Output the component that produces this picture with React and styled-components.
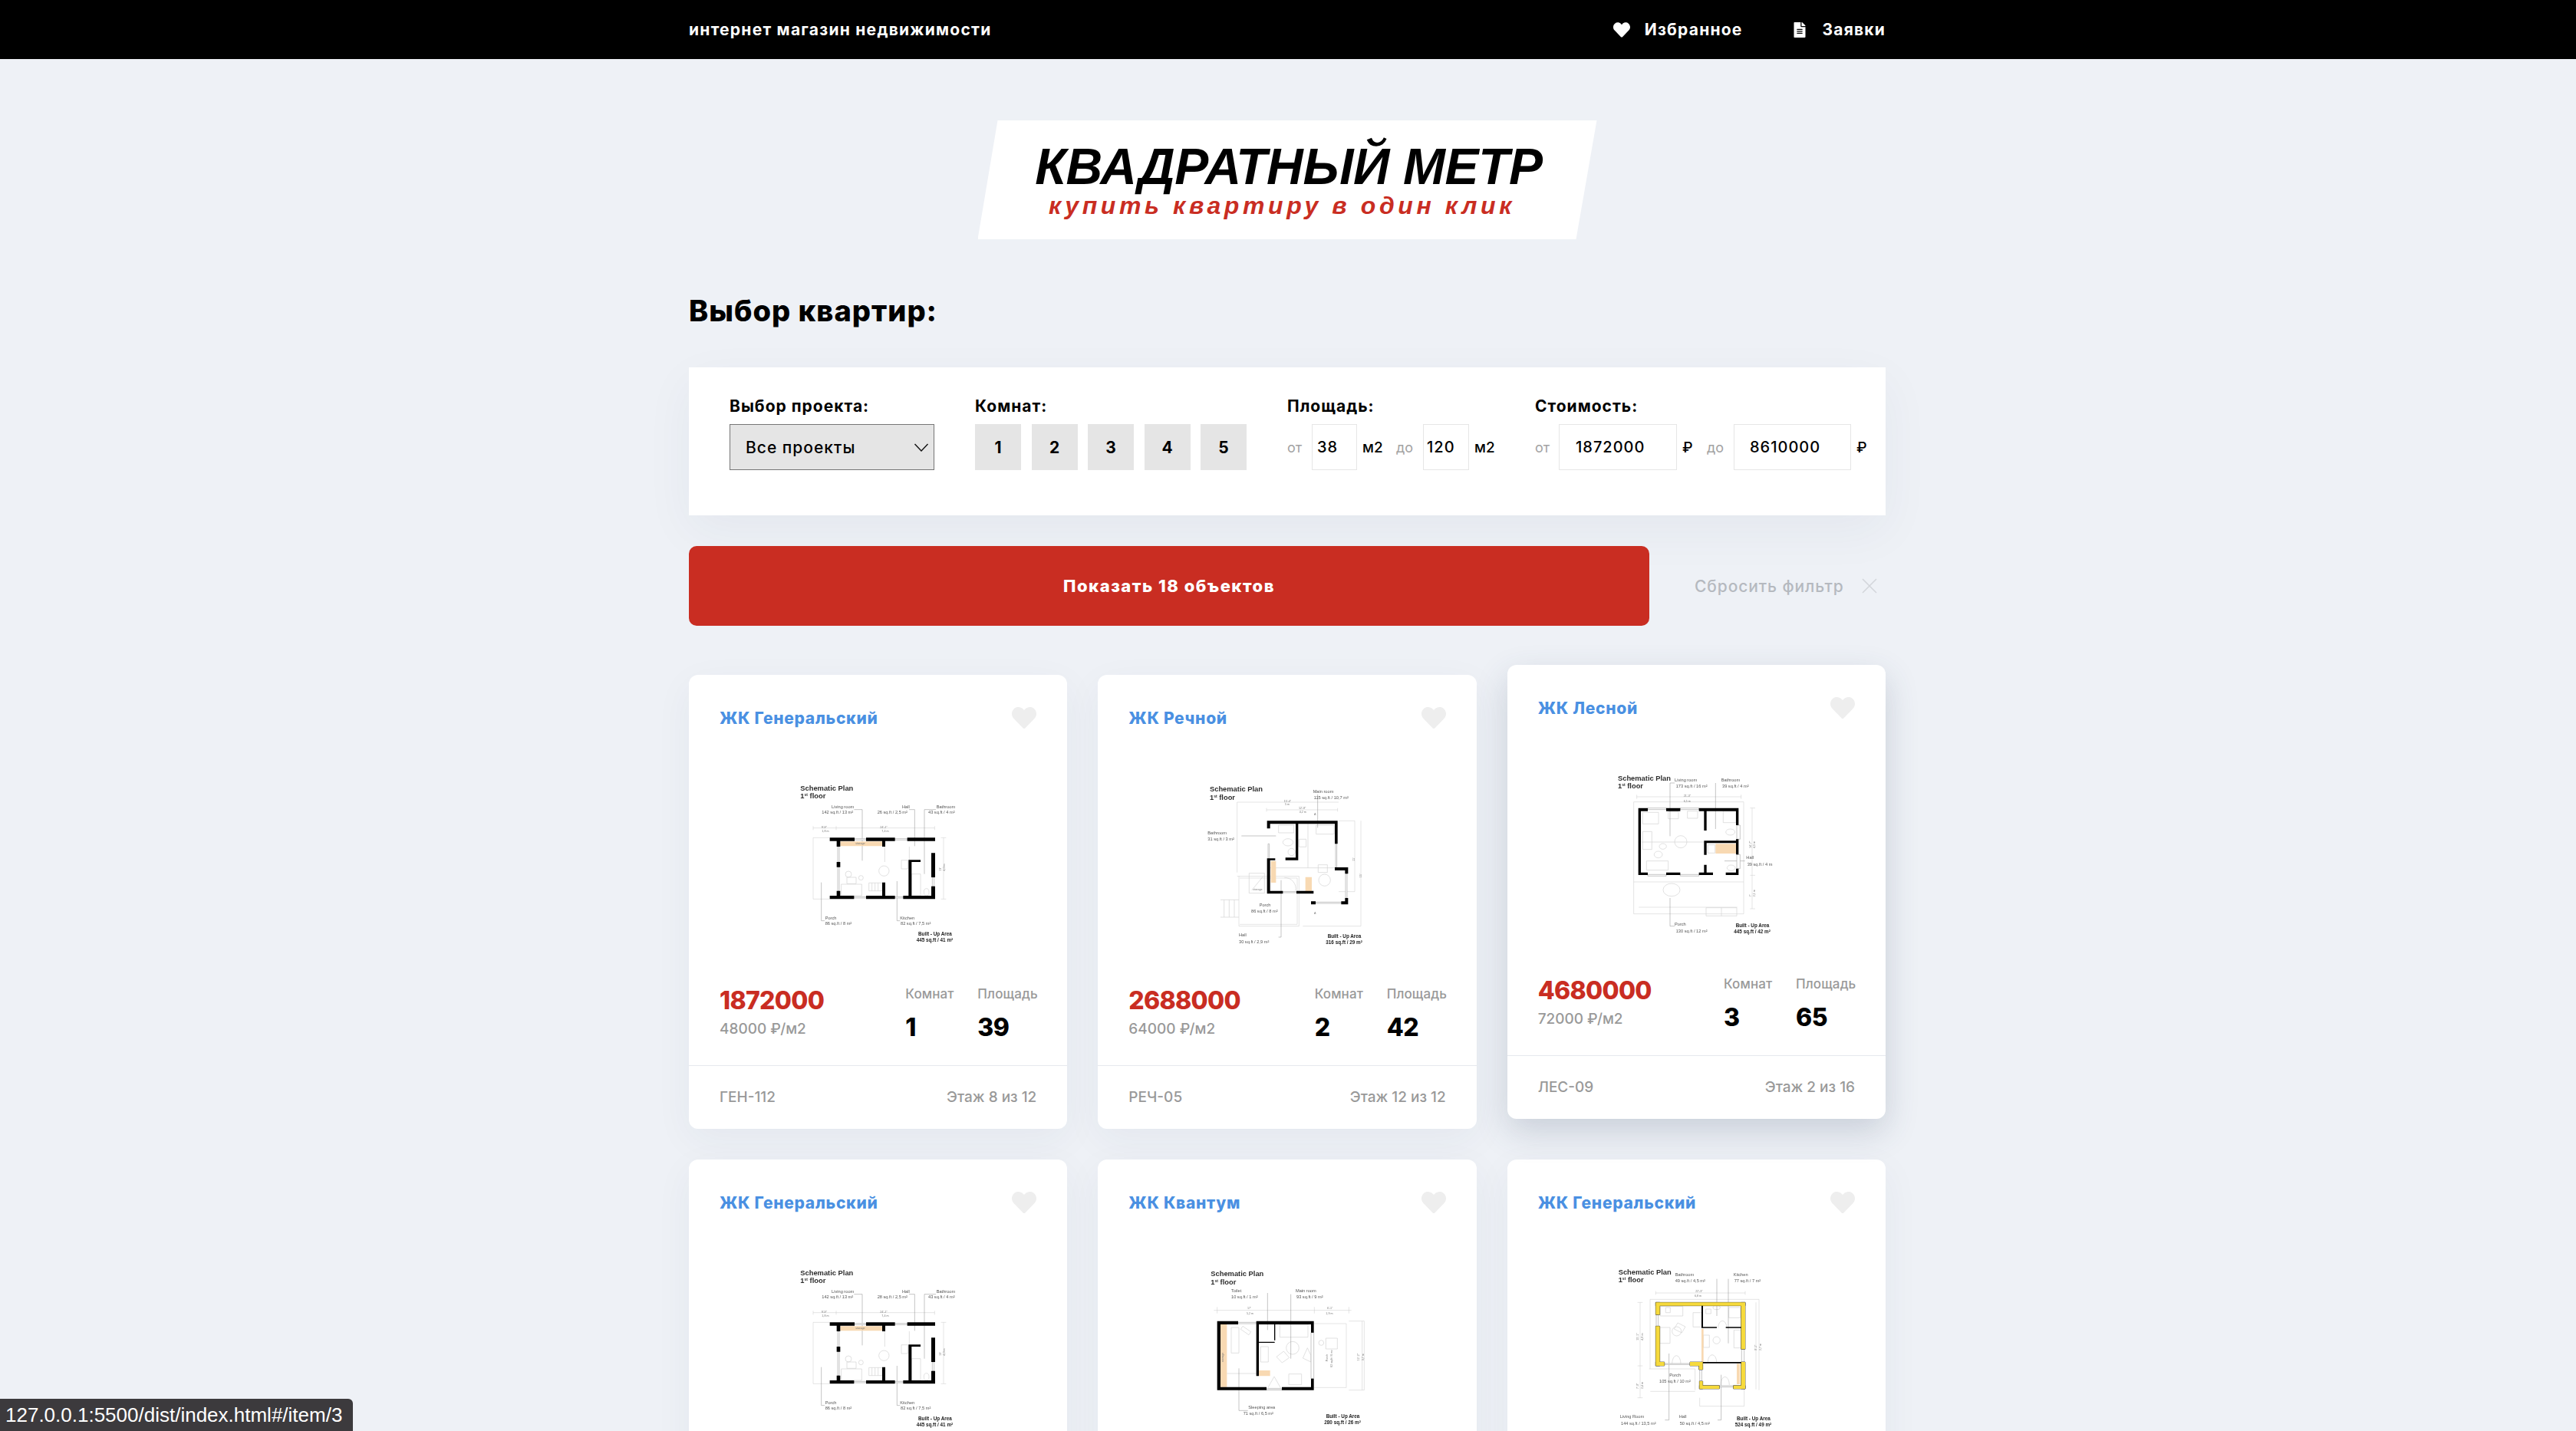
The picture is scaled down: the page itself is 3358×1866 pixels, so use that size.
import React from 'react';
import styled, { createGlobalStyle } from 'styled-components';
import { FaHeart, FaFileAlt } from 'react-icons/fa';

const GlobalStyle = createGlobalStyle`
  html, body {
    margin: 0;
    height: 100%;
    overflow: hidden;
  }
  body {
    padding-right: 2px;
    background: #eef1f6;
    color: #000;
    font-family: Inter, "Noto Sans", sans-serif;
  }
  * {
    box-sizing: border-box;
  }
`;

const Container = styled.div`
  width: 1560px;
  margin: 0 auto;
`;

const Header = styled.header`
  height: 77px;
  margin-right: -2px;
  padding-right: 2px;
  background: #000;
  color: #fff;
`;
const HeaderInner = styled(Container)`
  height: 100%;
  display: flex;
  align-items: center;
  justify-content: space-between;
`;
const Slogan = styled.div`
  font-size: 21px;
  font-weight: 700;
  letter-spacing: 1.25px;
`;
const Nav = styled.nav`
  display: flex;
  gap: 65px;
`;
const NavLink = styled.a`
  display: flex;
  align-items: center;
  gap: 19px;
  font-size: 21px;
  font-weight: 700;
  letter-spacing: 1.2px;
  svg {
    display: block;
  }
`;

const Logo = styled.div`
  width: 807px;
  height: 155px;
  margin: 80px auto 0;
  padding-top: 27px;
  background: #fff;
  clip-path: polygon(26px 0, 100% 0, calc(100% - 27px) 100%, 0 100%);
  display: flex;
  flex-direction: column;
  align-items: center;
  font-family: "Liberation Sans", Arial, sans-serif;
  font-style: italic;
  font-weight: 700;
`;
const LogoTitle = styled.div`
  font-size: 66px;
  line-height: 66px;
  letter-spacing: -0.4px;
  margin-left: 4px;
`;
const LogoSub = styled.div`
  font-size: 32px;
  line-height: 34px;
  letter-spacing: 4.6px;
  color: #c92d22;
  margin-top: 1px;
  margin-left: -14px;
`;

const PageTitle = styled.h1`
  margin: 70px 0 51px;
  font-size: 38px;
  line-height: 46px;
  font-weight: 800;
  letter-spacing: 1px;
`;

const FilterCard = styled.section`
  display: flex;
  gap: 53px;
  height: 193px;
  padding: 39px 0 0 53px;
  background: #fff;
  box-shadow: 0 20px 60px rgba(40, 60, 90, 0.05);
`;
const FilterLabel = styled.div`
  font-size: 21px;
  line-height: 24px;
  font-weight: 700;
  letter-spacing: 1px;
  margin-bottom: 11px;
  white-space: nowrap;
`;
const SelectWrap = styled.div`
  position: relative;
  width: 267px;
  height: 60px;
  svg {
    position: absolute;
    top: 25px;
    right: 7px;
    pointer-events: none;
  }
`;
const ProjectSelect = styled.select`
  appearance: none;
  width: 100%;
  height: 100%;
  padding: 0 20px;
  background: #e5e5e5;
  border: 1px solid #767676;
  border-radius: 0;
  color: #000;
  font: 500 21px Inter, sans-serif;
  letter-spacing: 1px;
`;
const Rooms = styled.div`
  display: flex;
  gap: 13.5px;
`;
const RoomButton = styled.button`
  width: 60px;
  height: 60px;
  padding: 0;
  border: none;
  background: #e5e5e5;
  color: #000;
  font: 700 21px Inter, sans-serif;
`;
const RangeRow = styled.div`
  display: flex;
  align-items: center;
  height: 60px;
`;
const RangeWord = styled.span`
  width: ${p => p.$w}px;
  font-size: 18px;
  color: #a3a3a3;
`;
const RangeUnit = styled.span`
  width: ${p => p.$w}px;
  padding-left: 7px;
  font-size: 19px;
  font-weight: 500;
  white-space: nowrap;
`;
const RangeInput = styled.input`
  width: ${p => p.$w}px;
  height: 60px;
  padding: 0 0 0 ${p => p.$pad}px;
  border: 1px solid #e6e6e6;
  background: #fff;
  color: #000;
  font: 500 20px Inter, sans-serif;
  letter-spacing: 1px;
  outline: none;
`;

const ActionRow = styled.div`
  display: flex;
  align-items: center;
  margin-top: 40px;
`;
const ShowButton = styled.button`
  width: 1252px;
  height: 104px;
  border: none;
  border-radius: 10px;
  background: #c92d22;
  color: #fff;
  font: 800 22px Inter, sans-serif;
  letter-spacing: 1.5px;
`;
const ResetLink = styled.a`
  display: flex;
  align-items: center;
  margin-left: 59px;
  font-size: 21px;
  font-weight: 500;
  color: #b5b9bf;
  letter-spacing: 0.9px;
  white-space: nowrap;
  svg {
    margin-left: 23px;
  }
`;

const CardGrid = styled.div`
  display: grid;
  grid-template-columns: repeat(3, 1fr);
  gap: 40px;
  margin-top: 64px;
`;
const Card = styled.article`
  height: 592px;
  border-radius: 12px;
  background: #fff;
  box-shadow: ${p => (p.$lifted ? '0 16px 44px rgba(50, 70, 100, 0.2)' : '0 14px 50px rgba(40, 60, 90, 0.05)')};
  transform: ${p => (p.$lifted ? 'translateY(-13px)' : 'none')};
`;
const CardTop = styled.div`
  display: flex;
  align-items: center;
  justify-content: space-between;
  height: 30px;
  margin: 41px 40px 0;
`;
const CardProject = styled.div`
  font-size: 21px;
  font-weight: 800;
  letter-spacing: 0.7px;
  color: #4a90e2;
`;
const PlanBox = styled.div`
  width: 250px;
  height: 250px;
  margin: 51px auto 0;
  svg {
    display: block;
    filter: blur(0.35px);
  }
`;
const CardInfo = styled.div`
  display: flex;
  justify-content: space-between;
  height: 103px;
  margin: 34px 40px 0;
`;
const Price = styled.div`
  font-size: 32px;
  line-height: 38px;
  font-weight: 800;
  color: #c92d22;
  letter-spacing: -0.7px;
`;
const PricePerMeter = styled.div`
  margin-top: 6px;
  font-size: 19px;
  line-height: 24px;
  font-weight: 500;
  color: #999;
`;
const Stats = styled.div`
  display: grid;
  grid-template-columns: 94px 77px;
`;
const StatLabel = styled.div`
  font-size: 17px;
  line-height: 20px;
  font-weight: 500;
  color: #999;
  letter-spacing: 0.1px;
`;
const StatValue = styled.div`
  margin-top: 15px;
  font-size: 32px;
  line-height: 38px;
  font-weight: 800;
  letter-spacing: -0.5px;
`;
const CardFooter = styled.div`
  display: flex;
  align-items: center;
  justify-content: space-between;
  height: 83px;
  padding: 0 40px 1px;
  border-top: 1px solid #e6e8ee;
  font-size: 19px;
  font-weight: 500;
  color: #999;
`;

const StatusBubble = styled.div`
  position: fixed;
  left: 0;
  bottom: 0;
  height: 42px;
  padding: 0 14px 0 7px;
  display: flex;
  align-items: center;
  background: #3c3a3d;
  border-top-right-radius: 6px;
  color: #fff;
  font: 26px "Liberation Sans", Arial, sans-serif;
`;

// floor plan drawing, coordinates are 3x real pixels
const PlanTitle = styled.text`
  font: 700 28px "Liberation Sans", Arial, sans-serif;
  fill: #2d2d2d;
`;
const PlanNote = styled.text`
  font: 17px "Liberation Sans", Arial, sans-serif;
  fill: #555;
`;
const PlanSmall = styled.text`
  font: 11px "Liberation Sans", Arial, sans-serif;
  fill: #777;
`;
const PlanBold = styled.text`
  font: 700 19px "Liberation Sans", Arial, sans-serif;
  fill: #222;
`;

const rects = list => list.map(([x, y, w, h]) => `M${x} ${y}h${w}v${h}h${-w}z`).join('');

const FloorPlan = ({ plan }) => (
  <svg width="250" height="250" viewBox="0 0 750 750">
    <g transform={`translate(${plan.dx} ${plan.dy})`}>
      <PlanTitle x={plan.title[0]} y={plan.title[1]}>Schematic Plan</PlanTitle>
      <PlanTitle x={plan.title[0]} y={plan.title[1] + 32}>
        1<tspan fontSize="15" dy="-9">st</tspan><tspan dy="9"> floor</tspan>
      </PlanTitle>
      <path d={plan.thin} fill="none" stroke="#c9c9c9" strokeWidth="1.5" />
      <path d={plan.furniture} fill="none" stroke="#d2d2d2" strokeWidth="2" />
      <path d={plan.leaders} fill="none" stroke="#8a8a8a" strokeWidth="1.5" />
      <path d={rects(plan.windows)} fill="#fff" stroke="#aaa" strokeWidth="2" />
      <path d={rects(plan.orange)} fill="#f8d9b2" />
      {plan.yellow && (
        <>
          <path d={rects(plan.yellow)} fill="#222" stroke="#222" strokeWidth="2" />
          <path d={rects(plan.yellow)} fill="#f6da3c" />
        </>
      )}
      <path d={rects(plan.walls)} fill="#000" />
      {plan.notes.map(([x, y, text]) => (
        <PlanNote key={`${x}-${y}`} x={x} y={y}>{text}</PlanNote>
      ))}
      {plan.small.map(([x, y, text, rotate]) => (
        <PlanSmall
          key={`${x}-${y}`}
          x={x}
          y={y}
          transform={rotate ? `rotate(-90 ${x} ${y})` : undefined}
        >
          {text}
        </PlanSmall>
      ))}
      <PlanBold x={plan.built[0] + 7} y={plan.built[1]}>Built - Up Area</PlanBold>
      <PlanBold x={plan.built[0]} y={plan.built[1] + 25}>{plan.built[2]}</PlanBold>
    </g>
  </svg>
);

const longPlan = (dx, dy, hall) => ({
  dx,
  dy,
  title: [40, 65],
  notes: [
    [162, 136, 'Living room'],
    [124, 155, '142 sq.ft / 13 m²'],
    [438, 135, 'Hall'],
    [341, 155, `${hall} sq.ft / 2,5 m²`],
    [572, 135, 'Bathroom'],
    [540, 155, '43 sq.ft / 4 m²'],
    [137, 571, 'Porch'],
    [137, 591, '86 sq.ft / 8 m²'],
    [430, 571, 'Kitchen'],
    [432, 591, '82 sq.ft / 7,5 m²'],
  ],
  small: [
    [122, 212, '9\'-9"'],
    [124, 228, '1,8 m'],
    [352, 212, '24\'-1"'],
    [358, 228, '7,4 m'],
    [590, 380, '13\'', true],
    [606, 380, '4,0 m', true],
    [256, 276, 'storage'],
  ],
  built: [494, 632, '445 sq.ft / 41 m²'],
  thin: 'M90 212H565M90 205V220M180 205V220M565 205V220M90 250H155M90 250V490H155M600 250V490M590 250H610M590 490H610',
  furniture:
    'M200 432h80v45h-80zM222 405h36v25h-36zM435 338h25v34h-25zM475 392h35v85h-35zM308 427h52v31h-52zM320 427v31M332 427v31M344 427v31M370 285v60M466 285v52M347 380a20 20 0 1 0 40 0a20 20 0 1 0 -40 0M216 393a12 12 0 1 0 24 0a12 12 0 1 0 -24 0M268 407a9 9 0 1 0 18 0a9 9 0 1 0 -18 0M523 463a10 14 0 1 0 20 0a10 14 0 1 0 -20 0',
  leaders: 'M250 140H282V340M465 140H487V283M570 140H525V392M122 425V575H135M418 420V575H430',
  windows: [
    [252, 254, 45, 5],
    [410, 254, 48, 5],
    [250, 481, 47, 5],
    [410, 481, 32, 5],
    [186, 285, 6, 60],
    [186, 365, 6, 93],
    [556, 405, 7, 35],
  ],
  orange: [[196, 265, 164, 18]],
  walls: [
    [155, 250, 97, 13],
    [297, 250, 113, 13],
    [458, 250, 109, 13],
    [155, 477, 95, 13],
    [297, 477, 113, 13],
    [442, 477, 125, 13],
    [182, 263, 14, 22],
    [182, 345, 14, 20],
    [182, 458, 14, 19],
    [360, 263, 12, 22],
    [360, 425, 12, 52],
    [463, 337, 12, 140],
    [463, 337, 47, 8],
    [552, 310, 15, 95],
    [552, 440, 15, 37],
  ],
});

const cornerPlan = {
  dx: 36,
  dy: 27,
  title: [36, 64],
  notes: [
    [440, 68, 'Main room'],
    [443, 92, '115 sq.ft / 10,7 m²'],
    [28, 230, 'Bathroom'],
    [28, 254, '31 sq.ft / 3 m²'],
    [230, 514, 'Porch'],
    [198, 537, '86 sq.ft / 8 m²'],
    [150, 630, 'Hall'],
    [150, 657, '30 sq.ft / 2,9 m²'],
  ],
  small: [
    [326, 105, '15\'-4"'],
    [330, 118, '5 m'],
    [384, 133, '12\'-9"'],
    [386, 147, '4,2 m'],
    [604, 335, '11\'', true],
    [630, 400, '15\'', true],
    [444, 155, 'A'],
    [444, 543, 'A'],
    [205, 450, 'storage'],
  ],
  built: [490, 636, '316 sq.ft / 29 m²'],
  thin: 'M143 105H540M143 105V380M258 135H536M258 128V142M536 128V142M540 178H603V455H540M627 178V590M400 590H627M143 395H385V590H150V395M153 402H378V583H153',
  furniture:
    'M78 487H150M78 555H150M92 487V555M112 487V555M132 487V555M190 383h60v78h-60zM200 450L244 396M305 195h60v30h-60zM322 262a20 14 0 1 0 40 0a20 14 0 1 0 -40 0M342 300a14 14 0 1 0 28 0a14 14 0 1 0 -28 0M462 410a23 23 0 1 0 46 0a23 23 0 1 0 -46 0M460 350h36v30h-36zM420 190V362M272 362H525M328 400a44 44 0 0 1 44 52M385 250h28v30h-28zM452 195h70v35h-70z',
  leaders: 'M160 237H295M315 410V633H305M458 75V205',
  windows: [
    [264, 268, 5, 58],
    [528, 268, 5, 92],
    [567, 385, 6, 95],
    [450, 496, 100, 5],
    [322, 455, 53, 4],
  ],
  orange: [
    [275, 335, 20, 85],
    [410, 398, 25, 57],
  ],
  walls: [
    [260, 178, 276, 12],
    [260, 178, 12, 30],
    [260, 325, 12, 138],
    [260, 452, 62, 11],
    [375, 452, 67, 11],
    [525, 178, 11, 90],
    [525, 360, 52, 12],
    [565, 360, 12, 25],
    [372, 190, 10, 142],
    [332, 322, 50, 10],
    [272, 325, 20, 7],
    [432, 493, 18, 12],
    [550, 493, 27, 12],
    [565, 480, 12, 25],
  ],
};

const forestPlan = {
  dx: -409,
  dy: -384,
  title: [478, 470],
  notes: [
    [700, 473, 'Living room'],
    [705, 498, '173 sq.ft / 16 m²'],
    [882, 473, 'Bathroom'],
    [886, 498, '39 sq.ft / 4 m²'],
    [980, 778, 'Hall'],
    [984, 805, '39 sq.ft / 4 m'],
    [700, 1039, 'Porch'],
    [705, 1064, '130 sq.ft / 12 m²'],
  ],
  small: [
    [735, 534, '21\'-3"'],
    [735, 554, '6,5 m'],
    [1000, 735, '14\'-7"', true],
    [1016, 735, '4,5 m', true],
    [1000, 925, '7\'', true],
    [1016, 925, '2,1 m', true],
  ],
  built: [932, 1044, '445 sq.ft / 42 m²'],
  thin: 'M552 534H960M552 526V542M960 526V542M540 554H970V992H540zM1003 578V972M995 578H1015M995 841H1015M995 972H1015M540 867H970M560 966H945',
  furniture:
    'M575 595h62v45h-62zM675 592h40v28h-40zM750 590h40v28h-40zM575 670h36v70h-36zM700 710a24 24 0 1 0 48 0a24 24 0 1 0 -48 0M640 728a14 11 0 1 0 28 0a14 11 0 1 0 -28 0M620 760a16 13 0 1 0 32 0a16 13 0 1 0 -32 0M590 785h85v36h-85zM570 711H815M655 898a33 25 0 1 0 66 0a33 25 0 1 0 -66 0M823 968h120v32H823zM883 968v32M890 590h50v45h-50zM900 672a18 12 0 1 0 36 0a18 12 0 1 0 -36 0M830 722h28v32h-28zM905 812a16 11 0 1 0 32 0a16 11 0 1 0 -32 0',
  leaders: 'M700 480H682V688M860 480V660M895 785H975M682 930V1040H700',
  windows: [
    [595, 578, 72, 6],
    [722, 578, 73, 6],
    [595, 838, 72, 6],
    [722, 838, 73, 6],
    [943, 645, 13, 55],
    [943, 760, 13, 55],
  ],
  orange: [[860, 718, 80, 38]],
  walls: [
    [558, 578, 37, 12],
    [667, 578, 55, 12],
    [795, 578, 155, 12],
    [558, 578, 10, 262],
    [558, 830, 37, 10],
    [667, 830, 55, 10],
    [795, 830, 55, 10],
    [900, 830, 50, 10],
    [940, 578, 10, 67],
    [940, 700, 10, 60],
    [940, 815, 10, 25],
    [815, 578, 10, 88],
    [815, 706, 135, 9],
    [815, 706, 10, 55],
    [815, 800, 10, 40],
  ],
};

const studioPlan = {
  dx: 36,
  dy: 21,
  title: [40, 69],
  notes: [
    [120, 133, 'Toilet'],
    [120, 157, '10 sq.ft / 1 m²'],
    [372, 133, 'Main room'],
    [375, 157, '93 sq.ft / 9 m²'],
    [187, 589, 'Sleeping area'],
    [167, 612, '71 sq.ft / 6,5 m²'],
  ],
  small: [
    [183, 197, '17\''],
    [180, 219, '5,2 m'],
    [495, 197, '6\'-1"'],
    [490, 219, '1,9 m'],
    [622, 400, '12\'-2"', true],
    [640, 400, '3,7 m', true],
    [498, 403, 'Porch', true],
    [516, 425, '62 sq.ft / 6 m²', true],
    [90, 405, 'storage', true],
  ],
  built: [484, 624, '280 sq.ft / 26 m²'],
  thin: 'M52 203H590M65 190V215M445 190V215M580 190V215M443 255H570V505H443M580 245H640V515H580M632 245V515',
  furniture:
    'M120 270h30v100h-30zM165 265l32 22l-8 12l-32 -22zM235 345h30v60h-30zM310 258h110v50H310zM335 350a25 25 0 1 0 50 0a25 25 0 1 0 -50 0M297 385l28 -22l22 25l-28 20zM400 390l18 -40l14 30v25zM345 452h50v42h-50zM490 312h45v42h-45zM462 330a10 10 0 1 0 20 0a10 10 0 1 0 -20 0M262 508l26 -46l26 46zM103 450H218',
  leaders: 'M262 135V280M353 140V392M150 430V595H185',
  windows: [
    [147, 250, 71, 5],
    [258, 510, 60, 5],
    [432, 290, 11, 180],
  ],
  orange: [
    [78, 258, 25, 245],
    [228, 438, 44, 22],
  ],
  walls: [
    [65, 245, 82, 13],
    [218, 245, 225, 13],
    [65, 245, 13, 270],
    [65, 503, 193, 12],
    [318, 503, 125, 12],
    [432, 245, 11, 45],
    [432, 470, 11, 45],
    [218, 245, 10, 215],
    [228, 326, 62, 4],
    [288, 258, 4, 62],
  ],
};

const yellowPlan = {
  dx: 41,
  dy: 21,
  title: [30, 62],
  notes: [
    [252, 70, 'Bathroom'],
    [252, 94, '49 sq.ft / 4,5 m²'],
    [480, 70, 'Kitchen'],
    [483, 94, '77 sq.ft / 7 m²'],
    [230, 462, 'Porch'],
    [190, 485, '105 sq.ft / 10 m²'],
    [36, 625, 'Living Room'],
    [40, 650, '144 sq.ft / 13,5 m²'],
    [267, 625, 'Hall'],
    [270, 650, '50 sq.ft / 4,5 m²'],
  ],
  small: [
    [332, 133, '22\'-3"'],
    [328, 149, '6,8 m'],
    [108, 320, '15\'-1"', true],
    [128, 320, '4,9 m', true],
    [108, 510, '7\'-9"', true],
    [128, 510, '2,4 m', true],
    [570, 360, '9\'-1"', true],
    [590, 360, '2,7 m', true],
  ],
  built: [486, 632, '524 sq.ft / 49 m²'],
  thin: 'M176 135H526M176 128V142M526 128V142M154 160H580V515M154 160V432M115 172V545M105 172H125M105 420H125M105 545H125M150 432H330V515M568 172V512M348 545V578H522V510M155 520H330',
  furniture:
    'M194 187h88v38h-88zM215 192h18v20h-18zM192 270h40v62h-40zM240 285a18 18 0 1 0 36 0a18 18 0 1 0 -36 0M262 252l30 15l-14 24l-30 -15zM322 212h34v56h-34zM362 300h24v48h-24zM400 320a14 14 0 1 0 28 0a14 14 0 1 0 -28 0M482 280h28v70h-28zM372 198h20v18h-20zM400 192a14 8 0 1 0 28 0a14 8 0 1 0 -28 0M462 192h45v40h-45zM420 272a17 28 0 0 1 34 0M380 405a17 28 0 0 1 34 0M240 412a17 32 0 0 1 34 0M430 495a17 32 0 0 1 34 0',
  leaders: 'M228 372V632H212M415 80V225M460 80V332M432 455V632H418',
  windows: [
    [178, 220, 8, 45],
    [212, 411, 98, 4],
    [348, 435, 8, 45],
    [425, 498, 55, 5],
    [512, 355, 10, 50],
  ],
  orange: [
    [355, 275, 8, 130],
    [493, 412, 12, 80],
  ],
  yellow: [
    [176, 172, 350, 13],
    [176, 172, 16, 48],
    [176, 265, 16, 155],
    [176, 405, 34, 15],
    [310, 405, 50, 15],
    [345, 420, 15, 15],
    [347, 480, 13, 30],
    [347, 497, 78, 13],
    [480, 497, 46, 13],
    [510, 172, 16, 183],
    [510, 405, 16, 105],
  ],
  walls: [
    [355, 185, 6, 87],
    [355, 268, 60, 4],
    [450, 268, 60, 4],
    [361, 405, 149, 5],
  ],
};

// the second row runs past the bottom of the window, only its top part shows
const flats = [
  { project: 'ЖК Генеральский', price: 1872000, perMeter: 48000, rooms: 1, area: 39, code: 'ГЕН-112', floor: 'Этаж 8 из 12', plan: longPlan(30, 21, 26) },
  { project: 'ЖК Речной', price: 2688000, perMeter: 64000, rooms: 2, area: 42, code: 'РЕЧ-05', floor: 'Этаж 12 из 12', plan: cornerPlan },
  { project: 'ЖК Лесной', price: 4680000, perMeter: 72000, rooms: 3, area: 65, code: 'ЛЕС-09', floor: 'Этаж 2 из 16', plan: forestPlan, lifted: true },
  { project: 'ЖК Генеральский', plan: longPlan(30, 21, 28) },
  { project: 'ЖК Квантум', plan: studioPlan },
  { project: 'ЖК Генеральский', plan: yellowPlan },
];

const FlatCard = ({ flat }) => (
  <Card $lifted={flat.lifted}>
    <CardTop>
      <CardProject>{flat.project}</CardProject>
      <FaHeart size={32} color="#eeeeee" />
    </CardTop>
    <PlanBox>
      <FloorPlan plan={flat.plan} />
    </PlanBox>
    {flat.price && (
      <>
        <CardInfo>
          <div>
            <Price>{flat.price}</Price>
            <PricePerMeter>{flat.perMeter} ₽/м2</PricePerMeter>
          </div>
          <Stats>
            <div>
              <StatLabel>Комнат</StatLabel>
              <StatValue>{flat.rooms}</StatValue>
            </div>
            <div>
              <StatLabel>Площадь</StatLabel>
              <StatValue>{flat.area}</StatValue>
            </div>
          </Stats>
        </CardInfo>
        <CardFooter>
          <span>{flat.code}</span>
          <span>{flat.floor}</span>
        </CardFooter>
      </>
    )}
  </Card>
);

const App = () => (
  <>
    <GlobalStyle />
    <Header>
      <HeaderInner>
        <Slogan>интернет магазин недвижимости</Slogan>
        <Nav>
          <NavLink>
            <FaHeart size={22} />
            Избранное
          </NavLink>
          <NavLink>
            <FaFileAlt size={20} />
            Заявки
          </NavLink>
        </Nav>
      </HeaderInner>
    </Header>
    <Container>
      <Logo>
        <LogoTitle>КВАДРАТНЫЙ МЕТР</LogoTitle>
        <LogoSub>купить квартиру в один клик</LogoSub>
      </Logo>
      <PageTitle>Выбор квартир:</PageTitle>
      <FilterCard>
        <div>
          <FilterLabel>Выбор проекта:</FilterLabel>
          <SelectWrap>
            <ProjectSelect defaultValue="all">
              <option value="all">Все проекты</option>
            </ProjectSelect>
            <svg width="20" height="11" viewBox="0 0 20 11" fill="none" stroke="#111" strokeWidth="1.4">
              <path d="M1.5 1l8.5 9l8.5-9" />
            </svg>
          </SelectWrap>
        </div>
        <div>
          <FilterLabel>Комнат:</FilterLabel>
          <Rooms>
            {[1, 2, 3, 4, 5].map(n => (
              <RoomButton key={n}>{n}</RoomButton>
            ))}
          </Rooms>
        </div>
        <div>
          <FilterLabel>Площадь:</FilterLabel>
          <RangeRow>
            <RangeWord $w={32}>от</RangeWord>
            <RangeInput $w={59} $pad={6} defaultValue="38" />
            <RangeUnit $w={51}>м2</RangeUnit>
            <RangeWord $w={35}>до</RangeWord>
            <RangeInput $w={60} $pad={4} defaultValue="120" />
            <RangeUnit $w={33}>м2</RangeUnit>
          </RangeRow>
        </div>
        <div>
          <FilterLabel>Стоимость:</FilterLabel>
          <RangeRow>
            <RangeWord $w={31}>от</RangeWord>
            <RangeInput $w={154} $pad={21} defaultValue="1872000" />
            <RangeUnit $w={39}>₽</RangeUnit>
            <RangeWord $w={35}>до</RangeWord>
            <RangeInput $w={153} $pad={20} defaultValue="8610000" />
            <RangeUnit $w={20}>₽</RangeUnit>
          </RangeRow>
        </div>
      </FilterCard>
      <ActionRow>
        <ShowButton>Показать 18 объектов</ShowButton>
        <ResetLink>
          Сбросить фильтр
          <svg width="20" height="20" viewBox="0 0 20 20" stroke="#d3d6db" strokeWidth="1.5">
            <path d="M1 1l18 18M19 1L1 19" />
          </svg>
        </ResetLink>
      </ActionRow>
      <CardGrid>
        {flats.map((flat, i) => (
          <FlatCard key={i} flat={flat} />
        ))}
      </CardGrid>
    </Container>
    <StatusBubble>127.0.0.1:5500/dist/index.html#/item/3</StatusBubble>
  </>
);

export default App;
